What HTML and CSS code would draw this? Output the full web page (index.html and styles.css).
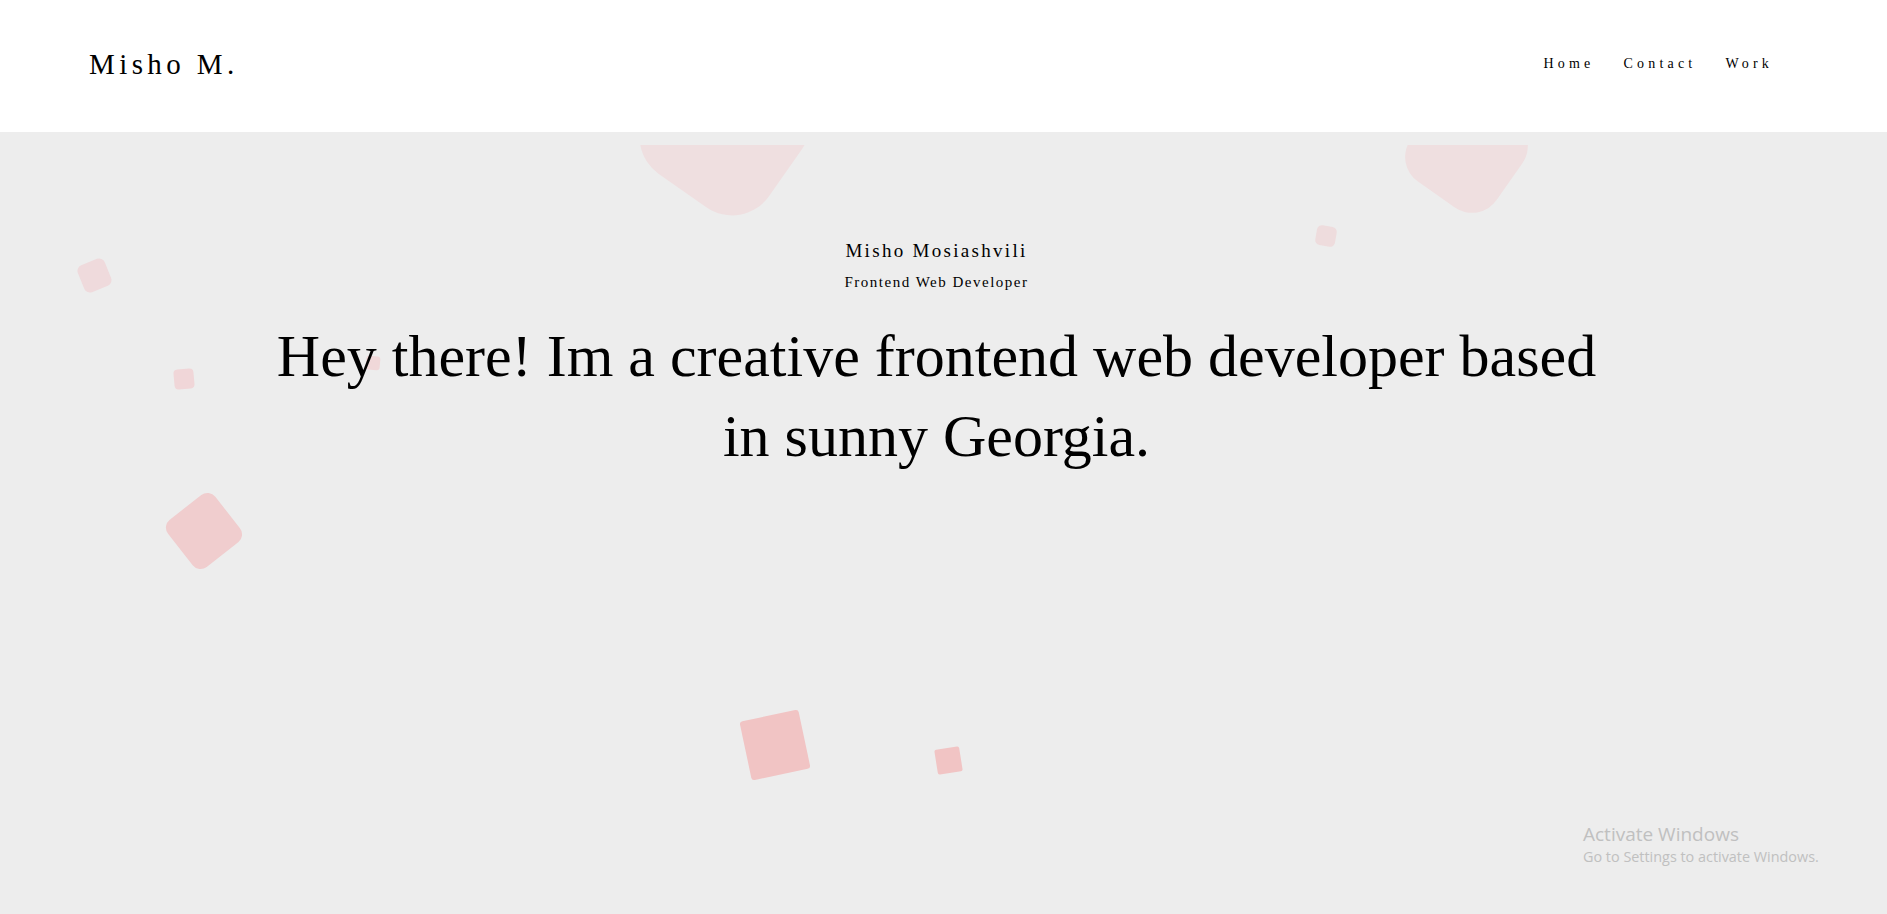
FILE: index.html
```html
<!DOCTYPE html>
<html lang="en">
<head>
<meta charset="utf-8">
<title>Misho M.</title>
<link rel="stylesheet" href="styles.css">
</head>
<body>
<header class="site-header">
  <a class="logo" href="#">Misho M.</a>
  <nav class="nav">
    <a href="#">Home</a>
    <a href="#">Contact</a>
    <a href="#">Work</a>
  </nav>
</header>
<main class="hero">
  <div class="shapes" aria-hidden="true">
    <span class="shape s-a"></span>
    <span class="shape s-b"></span>
    <span class="shape s-c"></span>
    <span class="shape s-d"></span>
    <span class="shape s-e"></span>
    <span class="shape s-f"></span>
    <span class="shape s-g"></span>
    <span class="shape s-h"></span>
    <span class="shape s-i"></span>
  </div>
  <div class="hero-content">
    <p class="name">Misho Mosiashvili</p>
    <p class="role">Frontend Web Developer</p>
    <h1 class="headline">Hey there! Im a creative frontend web developer based in sunny Georgia.</h1>
  </div>
  <div class="activate">
    <div class="activate-title">Activate Windows</div>
    <div class="activate-sub">Go to Settings to activate Windows.</div>
  </div>
</main>
</body>
</html>
```

FILE: styles.css
```css
* { box-sizing: border-box; }
html, body { margin: 0; padding: 0; }
body {
  font-family: "Liberation Serif", "Times New Roman", serif;
  color: #000;
  background: #ededed;
  overflow: hidden;
}
a { color: inherit; text-decoration: none; }

.site-header {
  height: 132px;
  background: #fff;
  display: flex;
  align-items: center;
  justify-content: space-between;
  padding: 0 114px 4px 89px;
}
.logo {
  font-size: 29px;
  letter-spacing: 4.4px;
}
.nav {
  display: flex;
  gap: 29px;
  font-size: 14px;
  letter-spacing: 4.2px;
}

.hero {
  position: relative;
  height: 782px;
  background: #ededed;
  overflow: hidden;
}
.shapes {
  position: absolute;
  top: 13px;
  left: 0;
  right: 0;
  bottom: 0;
  overflow: hidden;
}
.shape {
  position: absolute;
  display: block;
}
.s-a { left: 651px; top: -89px; width: 148px; height: 148px; border-radius: 45px; transform: rotate(35deg); background: #efdfe0; }
.s-b { left: 1414px; top: -46px; width: 105px; height: 105px; border-radius: 30px; transform: rotate(35deg); background: #efdfe0; }
.s-c { left: 1316px; top: 81px; width: 20px; height: 20px; border-radius: 5px; transform: rotate(10deg); background: #eedcdd; }
.s-d { left: 80px; top: 116px; width: 29px; height: 29px; border-radius: 6px; transform: rotate(-22deg); background: #efdadc; }
.s-e { left: 174px; top: 224px; width: 20px; height: 20px; border-radius: 4px; transform: rotate(-5deg); background: #f0d6d8; }
.s-f { left: 174px; top: 356px; width: 60px; height: 60px; border-radius: 10px; transform: rotate(-38deg); background: #f0cdce; }
.s-g { left: 366px; top: 211px; width: 14px; height: 14px; border-radius: 3px; transform: rotate(5deg); background: #f0d8d9; }
.s-h { left: 745px; top: 570px; width: 60px; height: 60px; border-radius: 3px; transform: rotate(-12deg); background: #f1c4c4; }
.s-i { left: 936px; top: 603px; width: 25px; height: 25px; border-radius: 2px; transform: rotate(-9deg); background: #f1c4c4; }

.hero-content {
  position: relative;
  display: flex;
  flex-direction: column;
  align-items: center;
  padding: 107px 14px 0 0;
  text-align: center;
}
.name {
  margin: 0;
  font-size: 19px;
  line-height: 24px;
  letter-spacing: 2.3px;
}
.role {
  margin: 9px 0 0;
  font-size: 15px;
  line-height: 20px;
  letter-spacing: 1.5px;
}
.headline {
  margin: 24px 0 0;
  max-width: 1340px;
  font-size: 60px;
  line-height: 80px;
  font-weight: normal;
}

.activate {
  position: absolute;
  left: 1583px;
  top: 689px;
  font-family: "Open Sans", "Noto Sans", sans-serif;
  color: #c0c0c0;
}
.activate-title {
  font-size: 19px;
  line-height: 26px;
}
.activate-sub {
  font-size: 14.4px;
  line-height: 20px;
}
```
